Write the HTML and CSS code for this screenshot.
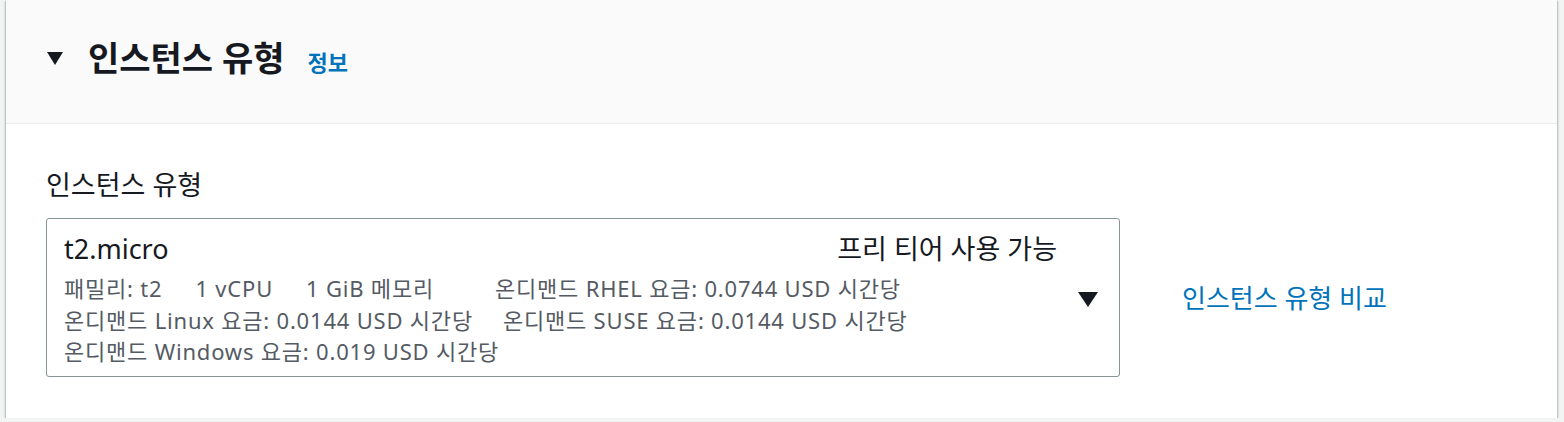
FILE: index.html
```html
<!DOCTYPE html>
<html lang="ko">
<head>
    <meta charset="UTF-8">
    <title>인스턴스 유형</title>
    <link rel="stylesheet" href="styles.css">
</head>
<body>
    <div class="card">
        <div class="card-header">
            <span class="caret-down big"></span>
            <h2>인스턴스 유형</h2>
            <a href="#" class="info">정보</a>
        </div>
        <div class="card-body">
            <div class="label">인스턴스 유형</div>
            <div class="field-row">
                <div class="select">
                    <div class="select-main">
                        <div class="top-line">
                            <span class="type-name">t2.micro</span>
                            <span class="free-tier">프리 티어 사용 가능</span>
                        </div>
                        <div class="detail-line">
                            <span>패밀리: t2</span>
                            <span>1 vCPU</span>
                            <span>1 GiB 메모리</span>
                            <span class="wide">온디맨드 RHEL 요금: 0.0744 USD 시간당</span>
                        </div>
                        <div class="detail-line gap-wide">
                            <span>온디맨드 Linux 요금: 0.0144 USD 시간당</span>
                            <span>온디맨드 SUSE 요금: 0.0144 USD 시간당</span>
                        </div>
                        <div class="detail-line">
                            <span>온디맨드 Windows 요금: 0.019 USD 시간당</span>
                        </div>
                    </div>
                    <div class="select-caret">
                        <span class="caret-down"></span>
                    </div>
                </div>
                <a href="#" class="compare">인스턴스 유형 비교</a>
            </div>
        </div>
    </div>
</body>
</html>
```

FILE: styles.css
```css
body {
    margin: 0;
    background: #f2f3f3;
    font-family: "Noto Sans", "Noto Sans CJK KR", sans-serif;
    color: #16191f;
}
.card {
    margin: 0 7px 0 6px;
    background: #ffffff;
    box-shadow: 0 1px 1px 0 rgba(0, 28, 36, 0.45), 1px 1px 2px 0 rgba(0, 28, 36, 0.2), -1px 1px 2px 0 rgba(0, 28, 36, 0.2);
}
.card-header {
    display: flex;
    align-items: center;
    background: #fafafa;
    border-bottom: 1px solid #eaeded;
    padding: 38px 40px 45px 41px;
    height: 40px;
}
.caret-down {
    display: inline-block;
    width: 0;
    height: 0;
    border-left: 10px solid transparent;
    border-right: 10px solid transparent;
    border-top: 15px solid #16191f;
}
.caret-down.big {
    border-left-width: 8px;
    border-right-width: 8px;
    border-top-width: 13px;
    margin-right: 25px;
}
h2 {
    margin: 0;
    font-size: 34px;
    font-weight: 700;
    line-height: 40px;
}
.info {
    margin-left: 23px;
    margin-top: 6px;
    font-size: 22px;
    font-weight: 700;
    color: #0073bb;
    text-decoration: none;
}
.card-body {
    padding: 45px 40px 41px 40px;
}
.label {
    font-size: 27px;
    line-height: 32px;
    margin-bottom: 17px;
}
.field-row {
    display: flex;
    align-items: center;
}
.select {
    display: flex;
    width: 1074px;
    box-sizing: border-box;
    border: 1px solid #879596;
    border-radius: 3px;
    padding: 15px 0 8px 17px;
}
.select-main {
    flex: 1;
}
.top-line {
    display: flex;
    justify-content: space-between;
    font-size: 27px;
    line-height: 30px;
    margin-bottom: 9px;
}
.detail-line {
    display: flex;
    gap: 33px;
    font-size: 22px;
    letter-spacing: 0.8px;
    line-height: 31.5px;
    color: #545b64;
}
.detail-line .wide {
    margin-left: 28px;
}
.detail-line.gap-wide {
    gap: 30px;
}
.select-caret {
    width: 62px;
    display: flex;
    align-items: center;
    justify-content: center;
    padding-bottom: 2px;
}
.compare {
    margin-left: 62px;
    font-size: 26px;
    color: #0073bb;
    text-decoration: none;
}
```
